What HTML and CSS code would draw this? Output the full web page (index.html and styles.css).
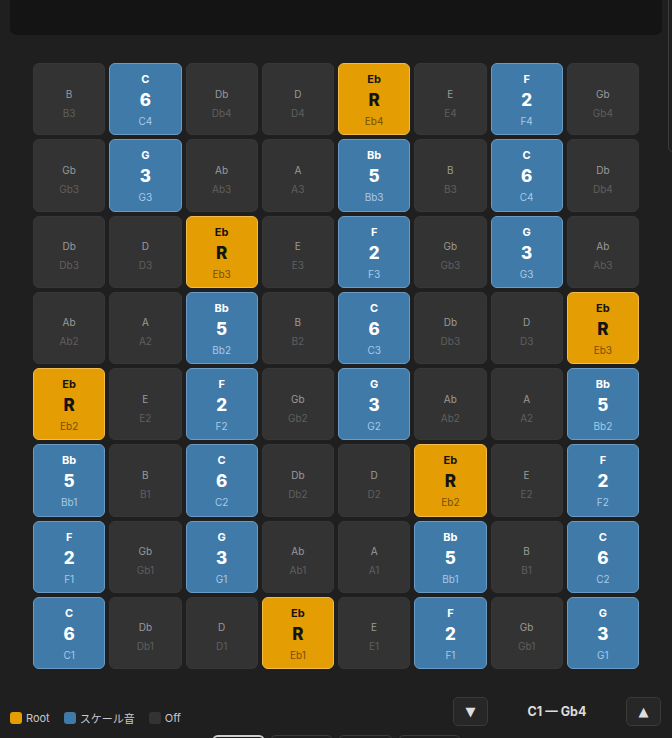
FILE: index.html
```html
<!DOCTYPE html>
<html lang="ja">
<head>
    <meta charset="UTF-8">
    <meta name="viewport" content="width=device-width, initial-scale=1.0">
    <title>Scale Grid</title>
    <link rel="stylesheet" href="styles.css">
</head>
<body>
    <div class="topbar"></div>
    <div class="side-panel"></div>

    <div class="board" id="board"></div>

    <div class="footer">
        <div class="legend">
            <span class="legend-item"><span class="swatch swatch-root"></span>Root</span>
            <span class="legend-item"><span class="swatch swatch-scale"></span>スケール音</span>
            <span class="legend-item"><span class="swatch swatch-off"></span>Off</span>
        </div>
        <div class="range">
            <button class="range-btn" id="downBtn">&#9660;</button>
            <span class="range-label" id="rangeLabel">C1 — Gb4</span>
            <button class="range-btn" id="upBtn">&#9650;</button>
        </div>
    </div>

    <div class="tabs">
        <span class="tab active"></span>
        <span class="tab wide"></span>
        <span class="tab"></span>
        <span class="tab wide"></span>
    </div>

    <script>
        // Note names (flats)
        const names = ['C', 'Db', 'D', 'Eb', 'E', 'F', 'Gb', 'G', 'Ab', 'A', 'Bb', 'B'];

        // Eb major pentatonic, relative to root
        const root = 3;
        const degrees = { 0: 'R', 2: '2', 4: '3', 7: '5', 9: '6' };

        const board = document.getElementById('board');
        const baseNote = 24; // C1
        const rows = 8;
        const cols = 8;

        function renderBoard() {
            board.innerHTML = '';
            for (let r = rows - 1; r >= 0; r--) {
                for (let c = 0; c < cols; c++) {
                    const midi = baseNote + r * 5 + c;
                    const pc = midi % 12;
                    const octave = Math.floor(midi / 12) - 1;
                    const name = names[pc];
                    const degree = degrees[(pc - root + 12) % 12];

                    const cell = document.createElement('div');
                    cell.className = 'pad';
                    if (degree === 'R') cell.classList.add('root');
                    else if (degree) cell.classList.add('scale');

                    if (degree) {
                        cell.innerHTML = `
                            <span class="pad-name">${name}</span>
                            <span class="pad-degree">${degree}</span>
                            <span class="pad-octave">${name}${octave}</span>
                        `;
                    } else {
                        cell.innerHTML = `
                            <span class="pad-name">${name}</span>
                            <span class="pad-octave">${name}${octave}</span>
                        `;
                    }
                    board.appendChild(cell);
                }
            }
        }

        renderBoard();
    </script>
</body>
</html>
```

FILE: styles.css
```css
* {
    box-sizing: border-box;
}

body {
    margin: 0;
    height: 738px;
    overflow: hidden;
    position: relative;
    background-color: #1f1f1f;
    font-family: Inter, "Noto Sans CJK JP", sans-serif;
    color: #d0d0d0;
}

.topbar {
    height: 35px;
    margin: 0 10px;
    background-color: #141414;
    border-radius: 0 0 7px 7px;
}

.side-panel {
    position: absolute;
    top: -10px;
    left: 668px;
    width: 20px;
    height: 163px;
    border: 1px solid #3a3a3a;
    border-radius: 6px;
}

.board {
    width: 606px;
    margin: 28px 0 0 33px;
    display: grid;
    grid-template-columns: repeat(8, 1fr);
    grid-auto-rows: 72.25px;
    gap: 4px;
}

.pad {
    display: flex;
    flex-direction: column;
    align-items: center;
    justify-content: center;
    gap: 9px;
    padding-top: 8px;
    background-color: #333333;
    border: 1px solid #373737;
    border-radius: 6px;
    line-height: 1;
}

.pad-name {
    font-size: 10px;
    color: #9a9a9a;
}

.pad-octave {
    font-size: 10px;
    color: #5f5f5f;
}

.pad.scale,
.pad.root {
    gap: 0;
    padding-top: 2px;
}

.pad.scale {
    background-color: #3f7aa9;
    border-color: #6b9bc4;
}

.pad.root {
    background-color: #e49d02;
    border-color: #f2bb4a;
}

.pad.scale .pad-name,
.pad.root .pad-name {
    font-weight: 700;
    font-size: 11px;
    height: 13px;
}

.pad-degree {
    font-weight: 800;
    font-size: 17px;
    margin: 5px 0 7px;
}

.pad.scale .pad-name,
.pad.scale .pad-degree {
    color: #ffffff;
}

.pad.scale .pad-octave {
    color: #a9c9e6;
}

.pad.root .pad-name,
.pad.root .pad-degree {
    color: #141414;
}

.pad.root .pad-octave {
    color: #76500a;
}

.footer {
    display: flex;
    justify-content: space-between;
    align-items: flex-start;
    padding: 0 11px 0 10px;
    margin-top: 28px;
}

.legend {
    display: flex;
    gap: 14px;
    margin-top: 13px;
    font-size: 11px;
    color: #c8c8c8;
}

.legend-item {
    display: flex;
    align-items: center;
    gap: 4px;
}

.swatch {
    width: 12px;
    height: 12px;
    border-radius: 3px;
}

.swatch-root {
    background-color: #e49d02;
}

.swatch-scale {
    background-color: #3f7aa9;
}

.swatch-off {
    background-color: #333333;
}

.range {
    display: flex;
    align-items: center;
}

.range-btn {
    width: 35px;
    height: 29px;
    padding: 0;
    background-color: #272727;
    border: 1px solid #3a3a3a;
    border-radius: 5px;
    color: #dedede;
    font-size: 13px;
    font-family: "DejaVu Sans", sans-serif;
    cursor: pointer;
}

.range-label {
    width: 138px;
    text-align: center;
    font-size: 12.5px;
    font-weight: 700;
    color: #dcdcdc;
}

.tabs {
    display: flex;
    gap: 5px;
    margin: 9px 0 0 212px;
}

.tab {
    width: 55px;
    height: 24px;
    border: 1px solid #3c3c3c;
    border-radius: 6px;
}

.tab.wide {
    width: 63px;
}

.tab.active {
    width: 53px;
    border-color: #9a9a9a;
    border-top: 2px solid #cfcfcf;
}
```
